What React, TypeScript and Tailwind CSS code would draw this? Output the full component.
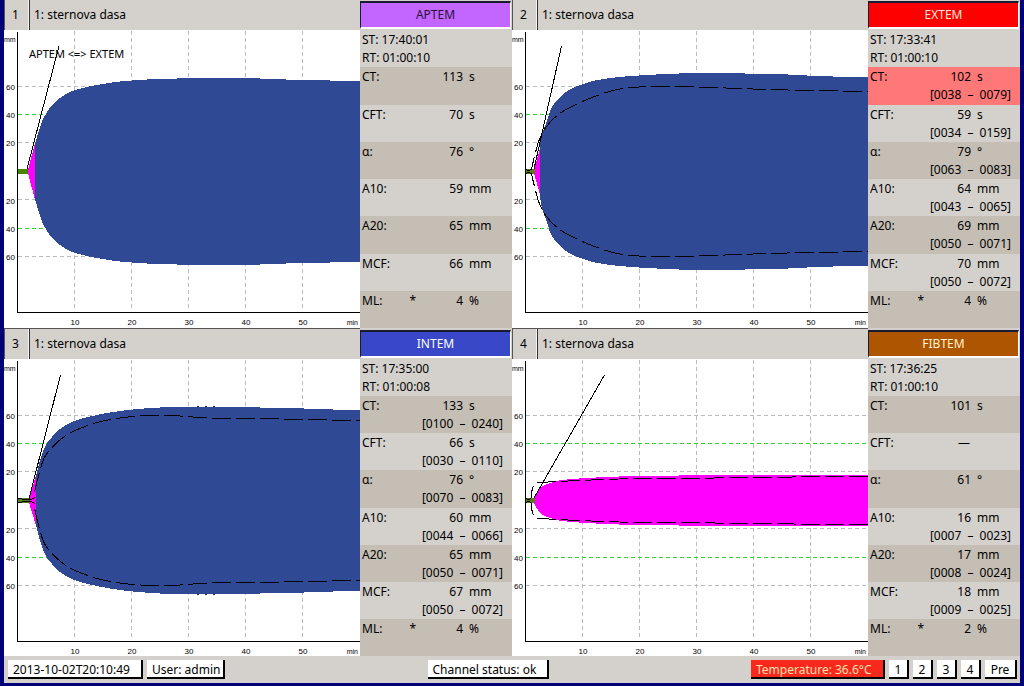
import React from "react";

type Point = [number, number];

interface Row {
  label: string;
  value: string;
  unit?: string;
  flag?: string;
  range?: [string, string];
  alert?: boolean;
}

interface Channel {
  id: number;
  title: string;
  assay: string;
  tint: string;
  start: string;
  run: string;
  rows: Row[];
  note?: string;
  // Amplitude curves: horizontal position in the plot, half height around the midline.
  forming: Point[];
  clot: Point[];
  reference?: Point[];
  tangent: [number, number, number, number];
  specks?: number[];
}

const MID = 141.5;

const channels: Channel[] = [
  {
    id: 1,
    title: "1: sternova dasa",
    assay: "APTEM",
    tint: "bg-[#c266ff] text-[#2a1238]",
    start: "17:40:01",
    run: "01:00:10",
    note: "APTEM <=> EXTEM",
    rows: [
      { label: "CT:", value: "113", unit: "s" },
      { label: "CFT:", value: "70", unit: "s" },
      { label: "α:", value: "76", unit: "°" },
      { label: "A10:", value: "59", unit: "mm" },
      { label: "A20:", value: "65", unit: "mm" },
      { label: "MCF:", value: "66", unit: "mm" },
      { label: "ML:", value: "4", unit: "%", flag: "*" },
    ],
    forming: [[24, 2], [31, 28]],
    clot: [[31, 28], [38, 50], [41, 56], [46, 64], [54, 72], [63, 78], [70, 81], [83, 84.5], [99, 87.5], [116, 90], [143, 92], [173, 93], [256, 93], [282, 92], [326, 91], [356, 90]],
    tangent: [23, 139, 55, 16],
  },
  {
    id: 2,
    title: "1: sternova dasa",
    assay: "EXTEM",
    tint: "bg-[#ff0000] text-[#ffe6d8]",
    start: "17:33:41",
    run: "01:00:10",
    rows: [
      { label: "CT:", value: "102", unit: "s", range: ["0038", "0079"], alert: true },
      { label: "CFT:", value: "59", unit: "s", range: ["0034", "0159"] },
      { label: "α:", value: "79", unit: "°", range: ["0063", "0083"] },
      { label: "A10:", value: "64", unit: "mm", range: ["0043", "0065"] },
      { label: "A20:", value: "69", unit: "mm", range: ["0050", "0071"] },
      { label: "MCF:", value: "70", unit: "mm", range: ["0050", "0072"] },
      { label: "ML:", value: "4", unit: "%", flag: "*" },
    ],
    forming: [[22, 2], [28, 23]],
    clot: [[28, 23], [29, 33], [35, 51], [39, 63], [45, 71], [53, 79], [62, 84], [71, 87.5], [83, 91], [103, 94], [127, 96], [167, 98], [207, 98.5], [233, 98], [256, 97.5], [276, 97], [305, 95.5], [356, 94]],
    reference: [[13, 2], [19, 2], [21.5, 11], [24, 21], [27, 31], [33, 43], [45, 56], [60, 65], [80, 74], [103, 81.5], [127, 84.5], [143, 85], [187, 84.5], [200, 84], [256, 82], [300, 81], [356, 80]],
    tangent: [22, 139, 49.5, 16],
  },
  {
    id: 3,
    title: "1: sternova dasa",
    assay: "INTEM",
    tint: "bg-[#3848c8] text-white",
    start: "17:35:00",
    run: "01:00:08",
    rows: [
      { label: "CT:", value: "133", unit: "s", range: ["0100", "0240"] },
      { label: "CFT:", value: "66", unit: "s", range: ["0030", "0110"] },
      { label: "α:", value: "76", unit: "°", range: ["0070", "0083"] },
      { label: "A10:", value: "60", unit: "mm", range: ["0044", "0066"] },
      { label: "A20:", value: "65", unit: "mm", range: ["0050", "0071"] },
      { label: "MCF:", value: "67", unit: "mm", range: ["0050", "0072"] },
      { label: "ML:", value: "4", unit: "%", flag: "*" },
    ],
    forming: [[25, 2], [32, 25]],
    clot: [[32, 25], [36, 40], [41, 54], [46, 61], [54, 70], [63, 76], [70, 79.5], [86, 84], [106, 88], [129, 91], [156, 93], [183, 93.5], [256, 93], [300, 92], [356, 90]],
    reference: [[13, 2], [30, 2], [31, 10], [33, 19], [38, 37], [41, 44], [49, 54], [59, 63], [71, 70], [93, 78], [109, 81.5], [129, 84], [153, 85], [176, 84.5], [196, 83], [223, 82], [256, 82], [300, 81], [356, 80]],
    tangent: [25, 140, 56.5, 16],
    specks: [193, 201, 209],
  },
  {
    id: 4,
    title: "1: sternova dasa",
    assay: "FIBTEM",
    tint: "bg-[#ad5500] text-[#fff3d0]",
    start: "17:36:25",
    run: "01:00:10",
    rows: [
      { label: "CT:", value: "101", unit: "s" },
      { label: "CFT:", value: "—" },
      { label: "α:", value: "61", unit: "°" },
      { label: "A10:", value: "16", unit: "mm", range: ["0007", "0023"] },
      { label: "A20:", value: "17", unit: "mm", range: ["0008", "0024"] },
      { label: "MCF:", value: "18", unit: "mm", range: ["0009", "0025"] },
      { label: "ML:", value: "2", unit: "%", flag: "*" },
    ],
    forming: [[22, 2], [25, 8], [30, 14], [37, 17], [47, 20], [67, 22], [107, 24], [167, 25], [260, 25.5], [356, 25]],
    clot: [],
    reference: [[13, 2], [19, 2], [20, 10], [22.5, 16], [25, 17.5], [40, 18.7], [67, 20], [107, 21.5], [167, 22], [260, 23.3], [356, 24]],
    tangent: [22, 139, 92.5, 16],
  },
];

// Cubic segments through the points; sign picks the side of the midline.
function segments(points: Point[], sign: 1 | -1) {
  const slope = (i: number) => {
    const a = points[Math.max(i - 1, 0)];
    const b = points[Math.min(i + 1, points.length - 1)];
    return (b[1] - a[1]) / (b[0] - a[0]);
  };
  return points
    .slice(1)
    .map(([x, a], i) => {
      const [px, pa] = points[i];
      const d = (x - px) / 3;
      const y1 = MID + sign * (pa + slope(i) * d);
      const y2 = MID + sign * (a - slope(i + 1) * d);
      return `C${px + d},${y1} ${x - d},${y2} ${x},${MID + sign * a}`;
    })
    .join(" ");
}

const side = (points: Point[], sign: 1 | -1) =>
  points.length ? `M${points[0][0]},${MID + sign * points[0][1]} ${segments(points, sign)}` : "";

function area(points: Point[]) {
  if (!points.length) return "";
  const [x0] = points[0];
  const [x1] = points[points.length - 1];
  return [-1, 1]
    .map((s) => `${side(points, s as 1 | -1)} L${x1},${MID} L${x0},${MID} Z`)
    .join(" ");
}

function Plot({ channel }: { channel: Channel }) {
  const { forming, clot, reference, tangent, note, specks } = channel;
  const [x1, y1, x2, y2] = tangent;
  return (
    <svg
      viewBox="0 0 356 297"
      preserveAspectRatio="xMinYMin meet"
      className="min-w-0 flex-1 bg-white"
      role="img"
      aria-label={channel.assay}
    >
      <g shapeRendering="crispEdges">
        {[70.5, 127.5, 184.5, 241.5, 298.5].map((x) => (
          <line key={x} x1={x} x2={x} y1="1" y2="280" stroke="#bcbcbc" strokeDasharray="4 3" />
        ))}
        {[56.5, 112.5, 169.5, 226.5].map((y) => (
          <line key={y} x1="14" x2="356" y1={y} y2={y} stroke="#bcbcbc" strokeDasharray="4 3" />
        ))}
        {[84.5, 198.5].map((y) => (
          <line key={y} x1="14" x2="356" y1={y} y2={y} stroke="#2fd42f" strokeDasharray="4 3" />
        ))}
        <path d={area(clot)} fill="#304994" />
        <path d={area(forming)} fill="#ff00ff" />
        {specks?.map((x) => (
          <React.Fragment key={x}>
            <rect x={x} y="47" width="2" height="1" fill="#182030" />
            <rect x={x} y="235" width="2" height="1" fill="#182030" />
          </React.Fragment>
        ))}
        <rect x="14" y="139" width={x1 - 13} height="5" fill={reference ? "#5a7a20" : "#458500"} />
        {reference && (
          <g fill="none" stroke="#000" strokeDasharray="19 5">
            <path d={side(reference, -1)} />
            <path d={side(reference, 1)} />
          </g>
        )}
        <line x1={x1} y1={y1} x2={x2} y2={y2} stroke="#000" />
        <path d="M13.5 2V282.5H356" fill="none" stroke="#000" />
      </g>
      <g fill="#000" className="font-['Liberation_Sans',sans-serif] text-[8px]">
        {[["60", 60], ["40", 88], ["20", 116], ["20", 174], ["40", 202], ["60", 230]].map(([t, y]) => (
          <text key={y} x="11" y={y} textAnchor="end">{t}</text>
        ))}
        {[10, 20, 30, 40, 50].map((t, i) => (
          <text key={t} x={71 + i * 57} y="295" textAnchor="middle">{t}</text>
        ))}
      </g>
      <g fill="#000" className="font-['Liberation_Sans',sans-serif] text-[7px]">
        <text x="0" y="12">mm</text>
        <text x="354" y="295" textAnchor="end">min</text>
      </g>
      {note && (
        <text x="25" y="28" className="text-[11px]">{note}</text>
      )}
    </svg>
  );
}

function Results({ channel }: { channel: Channel }) {
  return (
    <aside className="flex w-[152px] shrink-0 flex-col bg-[#d4d1cc] leading-[18px]">
      <div className="flex-1 basis-0 pl-[2px]">
        <p className="pt-px">ST: {channel.start}</p>
        <p>RT: {channel.run}</p>
      </div>
      <table className="flex grow-7 basis-0 flex-col">
        <tbody className="flex flex-1 flex-col">
          {channel.rows.map((row, i) => (
            <tr
              key={row.label}
              className={`grid flex-1 basis-0 grid-cols-[44px_10px_47px_1fr] content-start pt-px pl-[2px] ${
                row.alert ? "bg-[#ff7878]" : i % 2 === 0 ? "bg-[#c5beb4]" : "bg-[#d4d1cc]"
              }`}
            >
              <th scope="row" className="text-left font-normal">{row.label}</th>
              <td className="text-right">{row.flag}</td>
              <td className={row.unit ? "text-right" : "col-span-2 pl-[34px]"}>{row.value}</td>
              {row.unit && <td className="pl-[6px]">{row.unit}</td>}
              {row.range && (
                <td className="col-span-4 pr-[9px] text-right">
                  [{row.range[0]} <span className="px-[3px]">–</span> {row.range[1]}]
                </td>
              )}
            </tr>
          ))}
        </tbody>
      </table>
    </aside>
  );
}

function ChannelPanel({ channel }: { channel: Channel }) {
  const lower = channel.id > 2;
  return (
    <section className="flex min-w-0 flex-col">
      <header className={`flex bg-[#d4d1cc] ${lower ? "h-[31px]" : "h-[30px]"}`}>
        <div
          className={`flex min-w-0 flex-1 items-stretch border-l border-[#555] ${lower ? "border-t" : ""}`}
        >
          <span className="flex w-6 items-center justify-center border-r border-[#f4f4f4] pr-[2px]">
            {channel.id}
          </span>
          <h2 className="flex flex-1 items-center border-l border-[#333] pl-1">{channel.title}</h2>
        </div>
        <div className={`flex w-[152px] pr-px pb-px ${lower ? "pt-[2px]" : "pt-px"}`}>
          <button
            type="button"
            className={`flex-1 border-t-2 border-r border-b-2 border-l border-t-[#1a1a30] border-r-white border-b-white border-l-[#1a1a30] ${channel.tint}`}
          >
            {channel.assay}
          </button>
        </div>
      </header>
      <div className="flex flex-1">
        <Plot channel={channel} />
        <Results channel={channel} />
      </div>
    </section>
  );
}

const box = "h-[19px] border-r-2 border-b-2 border-black leading-[19px]";

export default function App() {
  return (
    <main className="flex min-h-screen flex-col border-x-4 border-b-3 border-[#000078] bg-[#d4d1cc] font-['Noto_Sans',sans-serif] text-[12px] text-black">
      <div className="grid flex-1 auto-rows-fr grid-cols-2">
        {channels.map((channel) => (
          <ChannelPanel key={channel.id} channel={channel} />
        ))}
      </div>
      <footer className="flex h-[27px] items-center justify-between pr-[3px] pl-1">
        <div className="flex gap-1">
          <time className={`${box} w-[135px] bg-white pl-[5px]`}>2013-10-02T20:10:49</time>
          <span className={`${box} w-[78px] bg-white pl-[5px]`}>User: admin</span>
        </div>
        <output className={`${box} w-[121px] bg-white pl-[5px]`}>Channel status: ok</output>
        <div className="flex gap-1">
          <output className={`${box} w-[134px] bg-[#f8281c] pl-[5px] text-[#ffe0b0]`}>
            Temperature: 36.6°C
          </output>
          {["1", "2", "3", "4"].map((n) => (
            <button key={n} type="button" className={`${box} w-5 bg-white`}>
              {n}
            </button>
          ))}
          <button type="button" className={`${box} w-8 bg-white`}>
            Pre
          </button>
        </div>
      </footer>
    </main>
  );
}
